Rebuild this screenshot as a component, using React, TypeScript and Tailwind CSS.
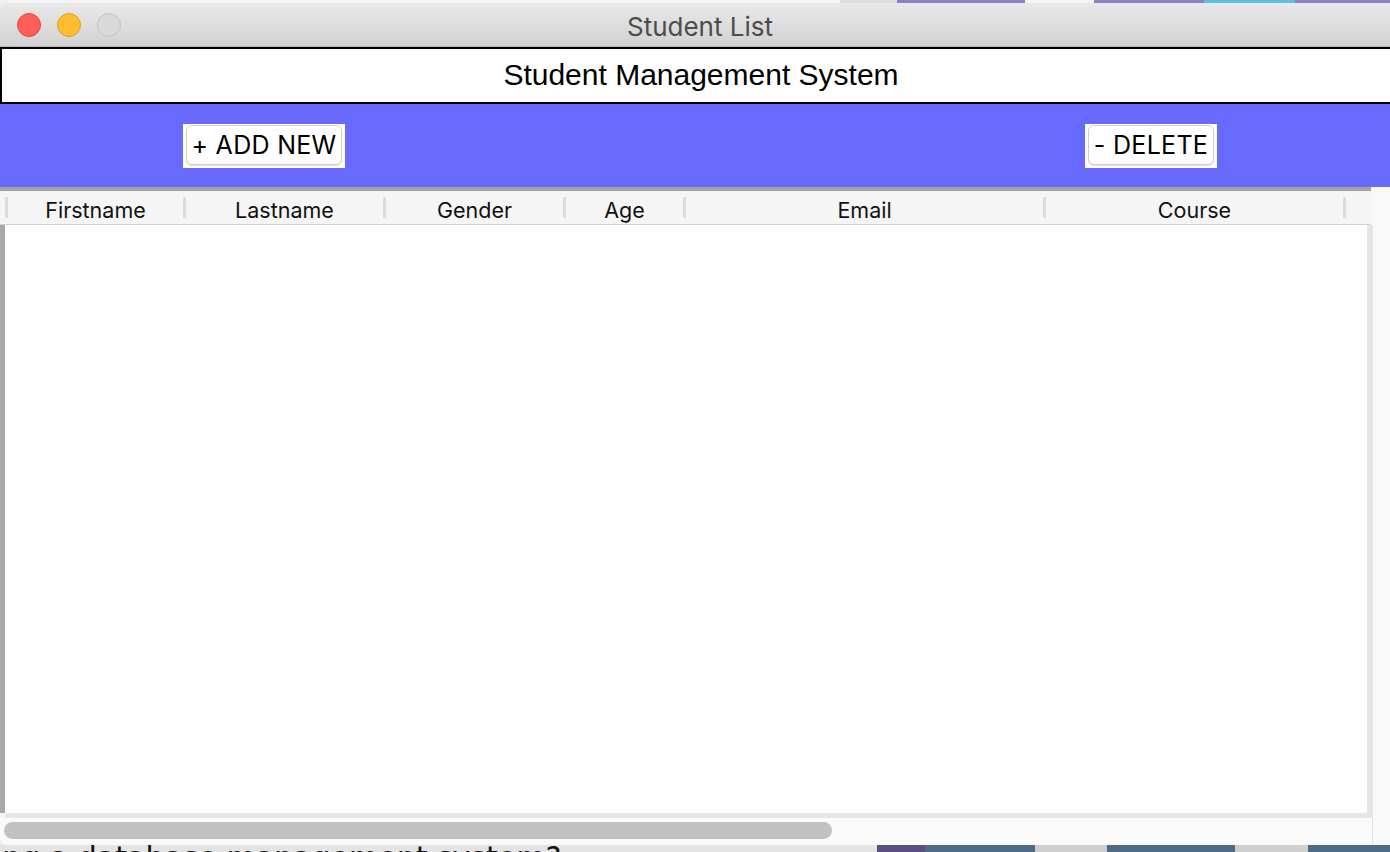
import React from "react";

const cols = [
  { label: "Firstname", w: "w-[178px]" },
  { label: "Lastname", w: "w-[200px]" },
  { label: "Gender", w: "w-[180px]" },
  { label: "Age", w: "w-[120px]" },
  { label: "Email", w: "w-[360px]" },
  { label: "Course", w: "w-[300px]" },
];

function MacButton({ label, outer }: { label: string; outer: string }) {
  return (
    <div className={`${outer} h-[44px] bg-white pt-[1px] pb-[3px] px-[3px] flex`}>
      <div className="flex-1 rounded-[6px] border border-[#cfcfcf] bg-white shadow-[0_1px_1px_rgba(0,0,0,0.15)] flex items-center justify-center text-[25px] leading-none text-black font-['Inter','Liberation_Sans',sans-serif] tracking-[0.3px]">
        {label}
      </div>
    </div>
  );
}

export default function App() {
  return (
    <div className="w-[1390px] h-[852px] overflow-hidden bg-[#ececec] flex flex-col font-['Inter','Liberation_Sans',sans-serif]">
      {/* background strip above window */}
      <div className="h-[3px] flex shrink-0">
        <div className="w-[840px] bg-[#f2f2f2]" />
        <div className="w-[57px] bg-[#dedede]" />
        <div className="w-[128px] bg-[#8e80c2]" />
        <div className="w-[69px] bg-[#f4f4f4]" />
        <div className="w-[110px] bg-[#8e80c2]" />
        <div className="w-[91px] bg-[#5fbfe0]" />
        <div className="flex-1 bg-[#8e80c2]" />
      </div>

      {/* window */}
      <div className="w-[1400px] h-[842px] shrink-0 rounded-t-[10px] rounded-b-[8px] overflow-hidden bg-[#f6f6f6] flex flex-col">
        {/* title bar */}
        <div className="h-[44px] shrink-0 bg-gradient-to-b from-[#e9e9e9] to-[#d2d2d2] border-b border-[#b9b9b9] grid grid-cols-[1fr_auto_1fr] items-center">
          <div className="flex items-center gap-[16px] pl-[17px]">
            <div className="w-[24px] h-[24px] rounded-full bg-[#fe5f57] border border-[#e2463f]" />
            <div className="w-[24px] h-[24px] rounded-full bg-[#febc2e] border border-[#dfa024]" />
            <div className="w-[24px] h-[24px] rounded-full bg-[#d9d9d9] border border-[#c2c2c2]" />
          </div>
          <div className="text-[26px] leading-none text-[#4c4c4c] pt-[5px]">Student List</div>
          <div />
        </div>

        {/* header */}
        <div className="h-[57px] shrink-0 bg-white border-t-2 border-b-2 border-l-2 border-black flex items-center justify-center">
          <span className="text-[30px] leading-none text-black font-['Liberation_Sans',Arial,sans-serif] pb-[1px]">
            Student Management System
          </span>
        </div>

        {/* toolbar */}
        <div className="h-[83px] shrink-0 bg-[#6869fd] flex items-center pl-[183px] gap-[740px] pt-[1px]">
          <MacButton label="+ ADD NEW" outer="w-[162px]" />
          <MacButton label="- DELETE" outer="w-[132px]" />
        </div>

        {/* content */}
        <div className="flex-1 flex">
          <div className="w-[1373px] flex flex-col">
            <div className="h-[4px] shrink-0 bg-[#a3a3a3] mr-[2px]" />
            {/* table header */}
            <div className="h-[34px] shrink-0 bg-[#f5f5f5] border-b border-[#d2d2d2] flex items-center pl-[5px] mr-[2px]">
              <div className="w-[3px] h-[21px] bg-[#dcdcdc]" />
              {cols.map((c) => (
                <div key={c.label} className={`${c.w} shrink-0 flex items-center h-full`}>
                  <div className="flex-1 text-center text-[21.5px] leading-none text-[#111] pt-[6px]">{c.label}</div>
                  <div className="w-[3px] h-[21px] bg-[#dcdcdc]" />
                </div>
              ))}
            </div>
            {/* body */}
            <div className="flex-1 flex">
              <div className="w-[5px] bg-[#a8a8a8]" />
              <div className="flex-1 bg-white" />
              <div className="w-[6px] bg-[#e6e6e6]" />
            </div>
            <div className="h-[5px] shrink-0 bg-[#e6e6e6] ml-[5px]" />
            {/* horizontal scrollbar */}
            <div className="h-[27px] shrink-0 bg-[#fafafa] border-r border-[#e2e2e2] flex items-center pl-[4px] pb-[2px]">
              <div className="w-[828px] h-[17px] rounded-full bg-[#c1c1c1]" />
            </div>
          </div>
          <div className="flex-1 bg-[#f8f8f8]" />
        </div>
      </div>

      {/* background strip below window */}
      <div className="h-[7px] shrink-0 flex overflow-hidden">
        <div className="w-[877px] bg-[#e4e4e4] overflow-hidden">
          <div className="text-[30px] leading-none text-[#111] font-['DejaVu_Sans',sans-serif] whitespace-nowrap -mt-[2px] -ml-[6px]">
            ing a database management system?
          </div>
        </div>
        <div className="w-[48px] bg-[#5a4f80]" />
        <div className="w-[110px] bg-[#4e6a84]" />
        <div className="w-[72px] bg-[#cfcfcf]" />
        <div className="w-[128px] bg-[#4e6a84]" />
        <div className="w-[73px] bg-[#cfcfcf]" />
        <div className="flex-1 bg-[#4e6a84]" />
      </div>
    </div>
  );
}
